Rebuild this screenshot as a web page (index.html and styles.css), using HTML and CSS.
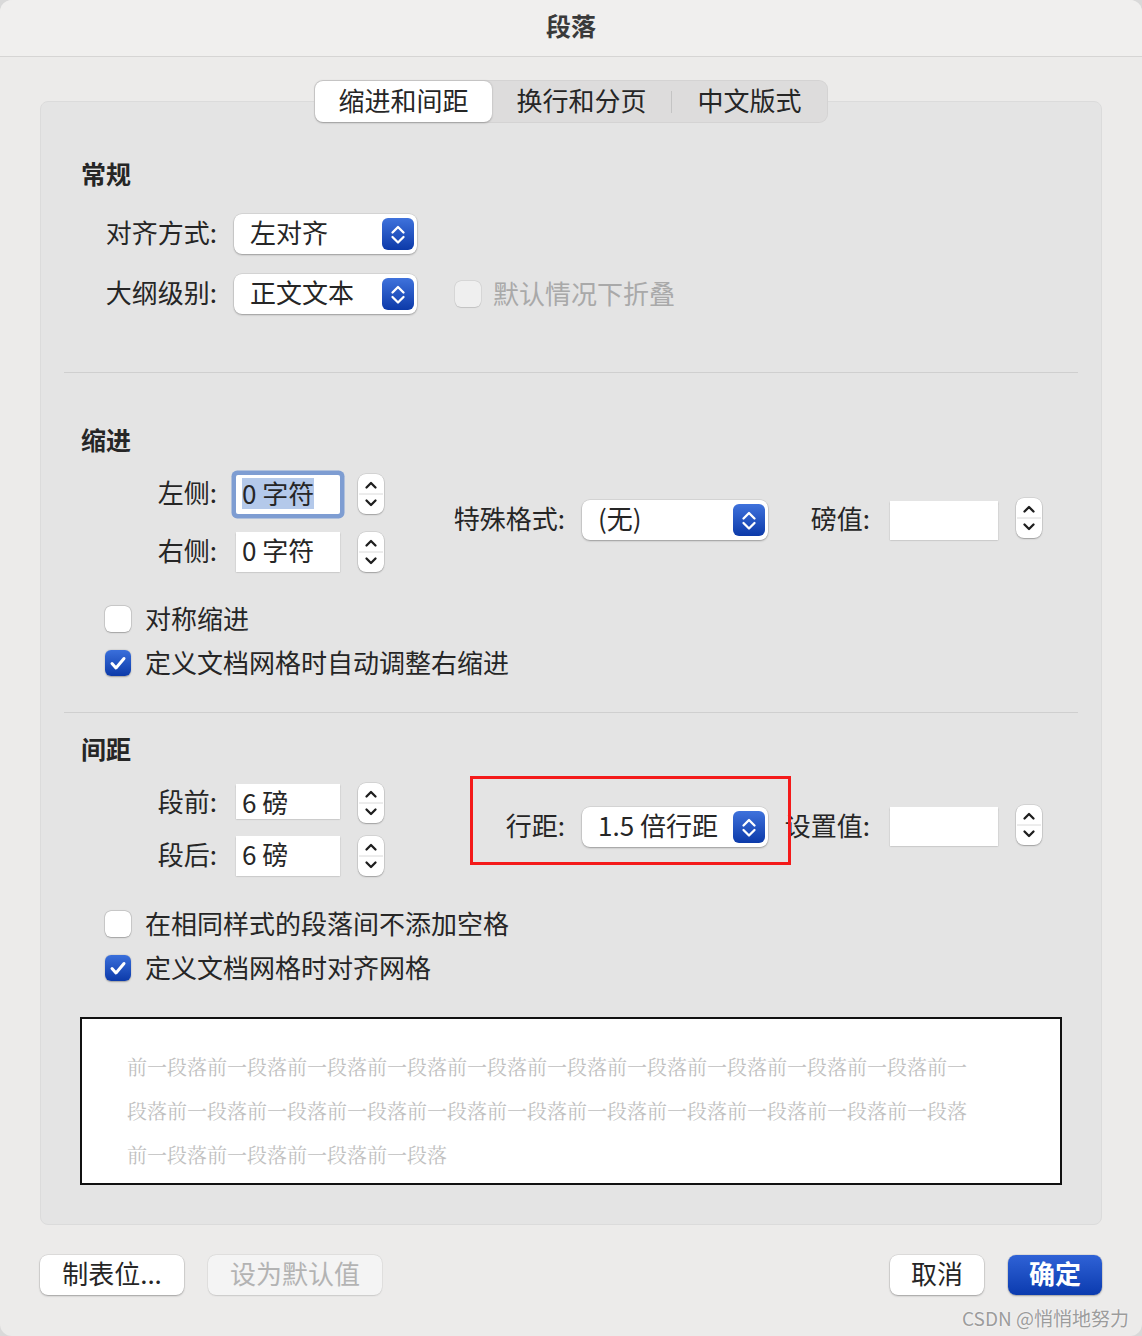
FILE: index.html
```html
<!DOCTYPE html>
<html lang="zh-CN">
<head>
<meta charset="utf-8">
<title>段落</title>
<link rel="stylesheet" href="styles.css">
</head>
<body>
<div class="window">
  <header class="titlebar"><h1>段落</h1></header>
  <main class="content">
    <nav class="tabs">
      <span class="tab t1 active">缩进和间距</span>
      <span class="tab t2">换行和分页</span>
      <span class="tab-sep"></span>
      <span class="tab t3">中文版式</span>
    </nav>
    <section class="panel">
      <div class="sec sec-general">
        <h2>常规</h2>
        <div class="form-row r1">
          <span class="lbl">对齐方式:</span>
          <div class="select sel-a"><span class="sv">左对齐</span><span class="pop"><svg viewBox="0 0 32 32" width="32" height="32"><path d="M10.5 14.5 L16 9 L21.5 14.5 M10.5 19 L16 24.5 L21.5 19" fill="none" stroke="#fff" stroke-width="2.3" stroke-linecap="round" stroke-linejoin="round"/></svg></span></div>
        </div>
        <div class="form-row r2">
          <span class="lbl">大纲级别:</span>
          <div class="select sel-a"><span class="sv">正文文本</span><span class="pop"><svg viewBox="0 0 32 32" width="32" height="32"><path d="M10.5 14.5 L16 9 L21.5 14.5 M10.5 19 L16 24.5 L21.5 19" fill="none" stroke="#fff" stroke-width="2.3" stroke-linecap="round" stroke-linejoin="round"/></svg></span></div>
          <label class="check disabled"><span class="cb"></span><span class="ct">默认情况下折叠</span></label>
        </div>
      </div>
      <div class="divider d1"></div>
      <div class="sec sec-indent">
        <h2>缩进</h2>
        <div class="cols">
          <div class="col-a">
            <div class="frow">
              <span class="lbl">左侧:</span>
              <div class="field focus"><span class="hl">0 字符</span></div>
              <span class="spin"><svg viewBox="0 0 26 40" width="26" height="40"><line x1="1" y1="20" x2="25" y2="20" stroke="#dadada" stroke-width="1"/><path d="M8.5 13.5 L13 9 L17.5 13.5 M8.5 26.5 L13 31 L17.5 26.5" fill="none" stroke="#1e1e1e" stroke-width="2.3" stroke-linecap="round" stroke-linejoin="round"/></svg></span>
            </div>
            <div class="frow">
              <span class="lbl">右侧:</span>
              <div class="field">0 字符</div>
              <span class="spin"><svg viewBox="0 0 26 40" width="26" height="40"><line x1="1" y1="20" x2="25" y2="20" stroke="#dadada" stroke-width="1"/><path d="M8.5 13.5 L13 9 L17.5 13.5 M8.5 26.5 L13 31 L17.5 26.5" fill="none" stroke="#1e1e1e" stroke-width="2.3" stroke-linecap="round" stroke-linejoin="round"/></svg></span>
            </div>
          </div>
          <div class="col-b">
            <span class="lbl2">特殊格式:</span>
            <div class="select sel-b"><span class="sv">(无)</span><span class="pop"><svg viewBox="0 0 32 32" width="32" height="32"><path d="M10.5 14.5 L16 9 L21.5 14.5 M10.5 19 L16 24.5 L21.5 19" fill="none" stroke="#fff" stroke-width="2.3" stroke-linecap="round" stroke-linejoin="round"/></svg></span></div>
            <span class="lbl3">磅值:</span>
            <div class="field wide"></div>
            <span class="spin"><svg viewBox="0 0 26 40" width="26" height="40"><line x1="1" y1="20" x2="25" y2="20" stroke="#dadada" stroke-width="1"/><path d="M8.5 13.5 L13 9 L17.5 13.5 M8.5 26.5 L13 31 L17.5 26.5" fill="none" stroke="#1e1e1e" stroke-width="2.3" stroke-linecap="round" stroke-linejoin="round"/></svg></span>
          </div>
        </div>
        <div class="checks">
          <label class="check"><span class="cb"></span><span class="ct">对称缩进</span></label>
          <label class="check"><span class="cb on"><svg viewBox="0 0 26 26" width="26" height="26"><path d="M7 13.5 L11 18 L19 8.5" fill="none" stroke="#fff" stroke-width="3" stroke-linecap="round" stroke-linejoin="round"/></svg></span><span class="ct">定义文档网格时自动调整右缩进</span></label>
        </div>
      </div>
      <div class="divider d2"></div>
      <div class="sec sec-spacing">
        <h2>间距</h2>
        <div class="cols">
          <div class="col-a tight">
            <div class="frow">
              <span class="lbl">段前:</span>
              <div class="field short">6 磅</div>
              <span class="spin"><svg viewBox="0 0 26 40" width="26" height="40"><line x1="1" y1="20" x2="25" y2="20" stroke="#dadada" stroke-width="1"/><path d="M8.5 13.5 L13 9 L17.5 13.5 M8.5 26.5 L13 31 L17.5 26.5" fill="none" stroke="#1e1e1e" stroke-width="2.3" stroke-linecap="round" stroke-linejoin="round"/></svg></span>
            </div>
            <div class="frow">
              <span class="lbl">段后:</span>
              <div class="field">6 磅</div>
              <span class="spin"><svg viewBox="0 0 26 40" width="26" height="40"><line x1="1" y1="20" x2="25" y2="20" stroke="#dadada" stroke-width="1"/><path d="M8.5 13.5 L13 9 L17.5 13.5 M8.5 26.5 L13 31 L17.5 26.5" fill="none" stroke="#1e1e1e" stroke-width="2.3" stroke-linecap="round" stroke-linejoin="round"/></svg></span>
            </div>
          </div>
          <div class="col-b">
            <span class="lbl2">行距:</span>
            <div class="select sel-b"><span class="sv">1.5 倍行距</span><span class="pop"><svg viewBox="0 0 32 32" width="32" height="32"><path d="M10.5 14.5 L16 9 L21.5 14.5 M10.5 19 L16 24.5 L21.5 19" fill="none" stroke="#fff" stroke-width="2.3" stroke-linecap="round" stroke-linejoin="round"/></svg></span></div>
            <span class="lbl3">设置值:</span>
            <div class="field wide"></div>
            <span class="spin"><svg viewBox="0 0 26 40" width="26" height="40"><line x1="1" y1="20" x2="25" y2="20" stroke="#dadada" stroke-width="1"/><path d="M8.5 13.5 L13 9 L17.5 13.5 M8.5 26.5 L13 31 L17.5 26.5" fill="none" stroke="#1e1e1e" stroke-width="2.3" stroke-linecap="round" stroke-linejoin="round"/></svg></span>
          </div>
        </div>
        <div class="checks">
          <label class="check"><span class="cb"></span><span class="ct">在相同样式的段落间不添加空格</span></label>
          <label class="check"><span class="cb on"><svg viewBox="0 0 26 26" width="26" height="26"><path d="M7 13.5 L11 18 L19 8.5" fill="none" stroke="#fff" stroke-width="3" stroke-linecap="round" stroke-linejoin="round"/></svg></span><span class="ct">定义文档网格时对齐网格</span></label>
        </div>
        <div class="preview">
          <p>前一段落前一段落前一段落前一段落前一段落前一段落前一段落前一段落前一段落前一段落前一</p>
          <p>段落前一段落前一段落前一段落前一段落前一段落前一段落前一段落前一段落前一段落前一段落</p>
          <p>前一段落前一段落前一段落前一段落</p>
        </div>
      </div>
    </section>
    <footer class="footer">
      <div class="btn-group">
        <button class="btn b-tabs">制表位...</button>
        <button class="btn b-default" disabled>设为默认值</button>
      </div>
      <div class="btn-group">
        <button class="btn b-cancel">取消</button>
        <button class="btn b-ok">确定</button>
      </div>
    </footer>
  </main>
  <div class="annot"></div>
  <div class="watermark">CSDN @悄悄地努力</div>
</div>
</body>
</html>
```

FILE: styles.css
```css
* { box-sizing: border-box; margin: 0; padding: 0; }
html, body { width: 1142px; height: 1336px; background: #d9d9d9; overflow: hidden; }
body {
  font-family: "Noto Sans CJK SC", "Noto Sans", sans-serif;
  color: #262626;
  font-size: 26px;
  line-height: 1;
}
.window {
  position: relative;
  width: 1142px;
  height: 1336px;
  background: #ecebea;
  border-radius: 12px;
  overflow: hidden;
}
.titlebar {
  height: 57px;
  background: #f0efee;
  border-bottom: 1px solid #d6d5d4;
  display: flex;
  align-items: center;
  justify-content: center;
  padding-bottom: 6px;
}
.titlebar h1 { font-size: 25px; font-weight: 700; color: #3a3a3a; line-height: 1; }

.content { padding: 23px 40px 0; }

.tabs {
  position: relative;
  z-index: 1;
  display: flex;
  align-items: center;
  width: 514px;
  height: 43px;
  margin: 0 auto;
  padding: 1px;
  background: #dddcdc;
  border-radius: 9px;
  box-shadow: inset 0 0 0 1px rgba(0,0,0,0.04);
}
.tab { height: 41px; display: flex; align-items: center; justify-content: center; font-size: 26px; color: #262626; padding-bottom: 4px; }
.tab.t1 { width: 177px; }
.tab.t2 { width: 179px; }
.tab.t3 { width: 155px; }
.tab.active { background: #fff; border-radius: 8px; box-shadow: 0 0.5px 2px rgba(0,0,0,0.28); }
.tab-sep { width: 1px; height: 22px; background: #c4c4c4; }

.panel {
  margin-top: -22px;
  background: #e4e4e4;
  border: 1px solid #dbdbdb;
  border-radius: 8px;
  padding: 0 23px 39px;
}
.sec h2 { font-size: 25px; font-weight: 700; line-height: 32px; margin-left: 17px; color: #262626; padding-bottom: 2px; }
.sec-general h2 { margin-top: 55px; }
.sec-indent h2 { margin-top: 50px; }
.sec-spacing h2 { margin-top: 19px; }

.divider { height: 1px; background: #cfcfcf; }
.d1 { margin-top: 58px; }
.d2 { margin-top: 36px; }

.form-row { display: flex; align-items: center; height: 40px; }
.r1 { margin-top: 23px; }
.r2 { margin-top: 20px; }
.lbl { width: 153px; text-align: right; white-space: nowrap; padding-bottom: 4px; }
.form-row .select { margin-left: 17px; }

.select {
  display: flex;
  align-items: center;
  justify-content: space-between;
  height: 40px;
  background: #fff;
  border-radius: 8px;
  padding: 0 3px 0 16px;
  box-shadow: 0 0 0 0.5px rgba(0,0,0,0.12), 0 1px 2px rgba(0,0,0,0.28);
  white-space: nowrap;
}
.sv { padding-bottom: 4px; }
.sel-a { width: 183px; }
.sel-b { width: 186px; }
.pop {
  width: 32px; height: 32px;
  border-radius: 6px;
  background: linear-gradient(#3f72dc, #0c3aa9);
  display: block;
}
.pop svg { display: block; }

.check { display: flex; align-items: center; height: 26px; gap: 14px; white-space: nowrap; }
.ct { padding-bottom: 2px; }
.cb {
  width: 26px; height: 26px;
  border-radius: 6px;
  background: #fff;
  box-shadow: 0 0 0 0.5px rgba(0,0,0,0.18), 0 0.5px 1.5px rgba(0,0,0,0.22);
  display: block;
  flex: none;
}
.cb svg { display: block; }
.cb.on { background: linear-gradient(#3a6fdb, #0c3aa9); box-shadow: 0 0.5px 1.5px rgba(0,0,0,0.3); }
.check.disabled { margin-left: 38px; color: #a9a9a9; gap: 12px; }
.check.disabled .cb { background: #efefef; box-shadow: 0 0 0 0.5px rgba(0,0,0,0.1), 0 0.5px 1px rgba(0,0,0,0.1); }

.cols { display: flex; align-items: center; margin-top: 17px; }
.col-a { display: flex; flex-direction: column; gap: 18px; }
.col-a.tight { gap: 13px; }
.frow { display: flex; align-items: center; height: 40px; }
.frow .field { margin-left: 19px; }
.frow .spin { margin-left: 18px; }

.field {
  width: 104px;
  height: 40px;
  background: #fff;
  display: flex;
  align-items: center;
  padding-left: 6px;
  padding-bottom: 4px;
  box-shadow: 0 0.5px 1.5px rgba(0,0,0,0.28);
  white-space: nowrap;
}
.field.short { height: 35px; align-self: flex-start; margin-top: 1px; padding-bottom: 0; }
.field.wide { width: 108px; height: 39px; margin-left: 20px; }
.field.focus { box-shadow: 0 0 0 4.5px #7e9dd2; border-radius: 2px; height: 39px; padding-bottom: 2px; }
.hl { background: #b4c9ea; padding: 2px 0 3px; }

.spin {
  width: 26px; height: 40px;
  background: #fff;
  border-radius: 8px;
  box-shadow: 0 0 0 0.5px rgba(0,0,0,0.14), 0 1px 1.5px rgba(0,0,0,0.25);
  display: block;
  flex: none;
}
.spin svg { display: block; }
.col-b .spin { margin-left: 18px; margin-top: -4px; }

.col-b { display: flex; align-items: center; margin-left: 69px; margin-bottom: 6px; }
.lbl2 { width: 112px; text-align: right; white-space: nowrap; padding-bottom: 4px; }
.col-b .select { margin-left: 17px; }
.lbl3 { width: 102px; text-align: right; white-space: nowrap; padding-bottom: 4px; }

.checks { display: flex; flex-direction: column; gap: 18px; margin-top: 34px; padding-left: 41px; }
.sec-spacing .checks { margin-top: 35px; }

.preview {
  margin: 36px 16px 0;
  height: 168px;
  background: #fff;
  border: 2px solid #111;
  padding: 26px 0 0 45px;
}
.preview p {
  font-family: "Noto Serif CJK SC", "Noto Sans CJK SC", serif;
  font-size: 20px;
  line-height: 44px;
  color: #c0c0c0;
  white-space: nowrap;
}

.footer { display: flex; justify-content: space-between; margin-top: 30px; }
.btn-group { display: flex; gap: 24px; }
.btn {
  height: 40px;
  border: none;
  border-radius: 8px;
  background: #fff;
  font-family: inherit;
  font-size: 26px;
  line-height: 1;
  padding-bottom: 4px;
  color: #262626;
  box-shadow: 0 0 0 0.5px rgba(0,0,0,0.12), 0 1px 2px rgba(0,0,0,0.28);
}
.b-tabs { width: 144px; }
.b-default { width: 174px; background: #f4f4f4; color: #b3b3b3; box-shadow: 0 0 0 0.5px rgba(0,0,0,0.06), 0 0.5px 1.5px rgba(0,0,0,0.12); }
.b-cancel { width: 94px; }
.b-ok { width: 94px; background: linear-gradient(#2f62d6, #0b3baf); color: #fff; font-weight: 700; }

.annot {
  position: absolute;
  left: 470px;
  top: 776px;
  width: 321px;
  height: 89px;
  border: 3px solid #f41a1a;
}
.watermark {
  position: absolute;
  right: 13px;
  bottom: 9px;
  font-size: 19px;
  color: #9c9c9c;
  text-shadow: 0 0 2px #fff;
  white-space: nowrap;
}
```
